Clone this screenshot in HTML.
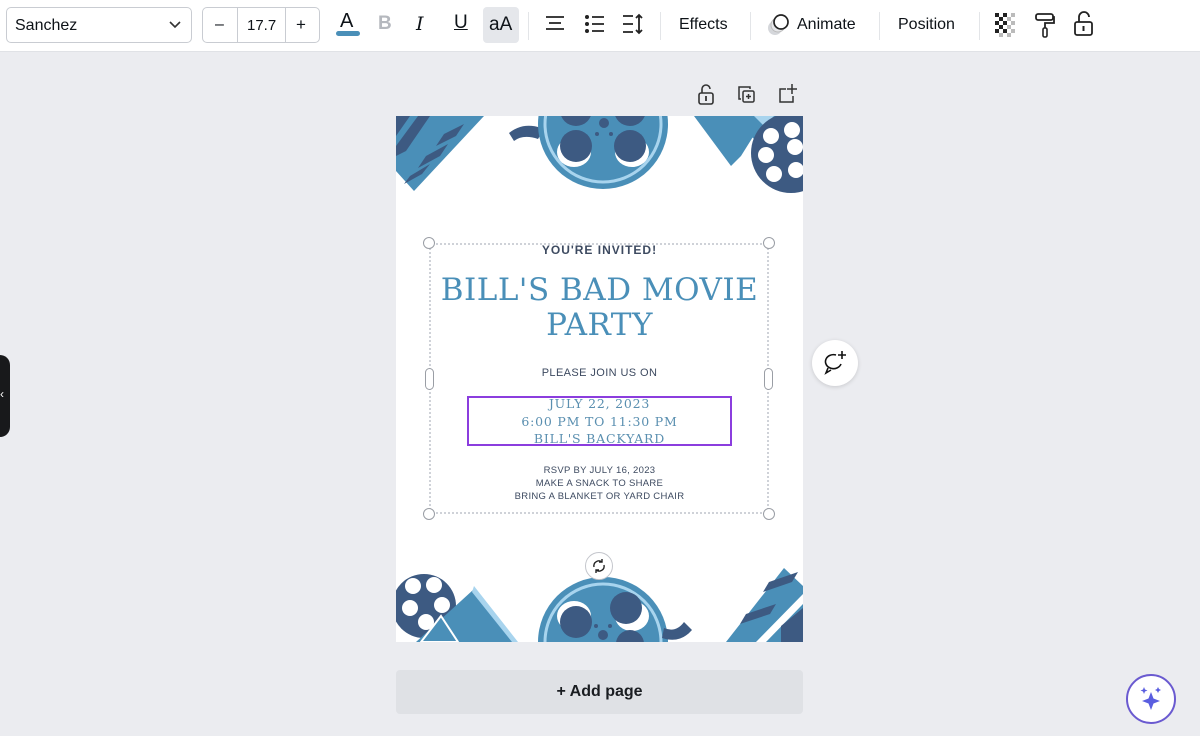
<!DOCTYPE html>
<html><head><meta charset="utf-8"><style>
*{margin:0;padding:0;box-sizing:border-box}
body{width:1200px;height:736px;background:#ebecf0;font-family:"Liberation Sans",sans-serif;position:relative;overflow:hidden;color:#0e1318}
.tb{position:absolute;left:0;top:0;width:1200px;height:52px;background:#fff;border-bottom:1px solid #e0e2e6}
.a{position:absolute}
.sel{left:6px;top:7px;width:186px;height:36px;border:1px solid #c9ccd2;border-radius:5px;font-size:16px;padding:9px 0 0 8px}
.sz{left:202px;top:7px;width:118px;height:36px;border:1px solid #c9ccd2;border-radius:5px}
.sep{width:1px;height:28px;background:#e3e5e8;top:12px}
.txt{font-size:16px;top:16px}
.serif{font-family:"DejaVu Serif","Liberation Serif",serif}
.page{left:396px;top:116px;width:407px;height:526px;background:#fff;overflow:hidden}
.c{position:absolute;left:0;width:407px;text-align:center}
.h{width:12px;height:12px;border:1px solid #9a9ea5;border-radius:50%;background:#fff;position:absolute}
</style></head><body>
<div class="tb">
 <div class="a sel">Sanchez<svg class="a" style="left:162px;top:13px" width="12" height="8"><path d="M1 1l5 5 5-5" stroke="#333" stroke-width="1.6" fill="none"/></svg></div>
 <div class="a sz"><div class="a" style="left:34px;top:0;width:1px;height:34px;background:#c9ccd2"></div><div class="a" style="left:82px;top:0;width:1px;height:34px;background:#c9ccd2"></div>
  <span class="a" style="left:12px;top:8px;font-size:16px">–</span><span class="a" style="left:44px;top:9px;font-size:15px">17.7</span><span class="a" style="left:93px;top:7px;font-size:17px">+</span></div>
 <span class="a" style="left:340px;top:10px;font-size:20px">A</span><div class="a" style="left:336px;top:31px;width:24px;height:5px;border-radius:3px;background:#4a8fb8"></div>
 <span class="a" style="left:378px;top:13px;font-size:19px;font-weight:bold;color:#b5b8be">B</span>
 <span class="a serif" style="left:416px;top:13px;font-size:19px;font-style:italic">I</span>
 <span class="a" style="left:454px;top:12px;font-size:19px;text-decoration:underline">U</span>
 <div class="a" style="left:483px;top:7px;width:36px;height:36px;background:#e5e7eb;border-radius:4px;font-size:19px;padding:7px 0 0 6px">aA</div>
 <div class="a sep" style="left:528px"></div>
 <svg class="a" style="left:545px;top:15px" width="20" height="18"><path d="M1 2h18M4 8h12M1 14h18" stroke="#222" stroke-width="1.8"/></svg>
 <svg class="a" style="left:584px;top:14px" width="22" height="20"><circle cx="3" cy="3" r="2" fill="#222"/><circle cx="3" cy="10" r="2" fill="#222"/><circle cx="3" cy="17" r="2" fill="#222"/><path d="M8 3h12M8 10h12M8 17h12" stroke="#222" stroke-width="1.8"/></svg>
 <svg class="a" style="left:622px;top:13px" width="22" height="22"><path d="M1 3h10M1 11h10M1 19h10M17 2v18M14 5l3-3 3 3M14 17l3 3 3-3" stroke="#222" stroke-width="1.8" fill="none"/></svg>
 <div class="a sep" style="left:660px"></div>
 <span class="a txt" style="left:679px">Effects</span>
 <div class="a sep" style="left:750px"></div>
 <svg class="a" style="left:766px;top:12px" width="26" height="26"><circle cx="9" cy="16" r="7" fill="#d5d7db"/><circle cx="12" cy="13" r="7" fill="#e6e7ea" stroke="#bbb"/><circle cx="15" cy="10" r="7" fill="#fff" stroke="#222" stroke-width="1.7"/></svg>
 <span class="a txt" style="left:797px">Animate</span>
 <div class="a sep" style="left:879px"></div>
 <span class="a txt" style="left:898px">Position</span>
 <div class="a sep" style="left:979px"></div>
 <svg class="a" style="left:995px;top:13px" width="24" height="24"><g fill="#222"><rect x="0" y="0" width="4" height="4"/><rect x="8" y="0" width="4" height="4"/><rect x="4" y="4" width="4" height="4"/><rect x="0" y="8" width="4" height="4"/><rect x="8" y="8" width="4" height="4"/><rect x="4" y="12" width="4" height="4"/><rect x="0" y="16" width="4" height="4"/><rect x="8" y="16" width="4" height="4"/></g><g fill="#bbb"><rect x="12" y="4" width="4" height="4"/><rect x="16" y="0" width="4" height="4"/><rect x="12" y="12" width="4" height="4"/><rect x="16" y="8" width="4" height="4"/><rect x="16" y="16" width="4" height="4"/><rect x="12" y="20" width="4" height="4"/><rect x="4" y="20" width="4" height="4"/></g></svg>
 <svg class="a" style="left:1034px;top:12px" width="22" height="26"><rect x="2" y="2" width="17" height="6" rx="2" stroke="#222" stroke-width="1.8" fill="none"/><path d="M19 5h1v6H11v5" stroke="#222" stroke-width="1.8" fill="none"/><rect x="9" y="16" width="4" height="9" rx="1.5" stroke="#222" stroke-width="1.6" fill="none"/></svg>
 <svg class="a" style="left:1073px;top:11px" width="22" height="26"><path d="M6 11V6a5 5 0 0 1 10 0" stroke="#222" stroke-width="1.8" fill="none"/><rect x="2" y="11" width="17" height="13" rx="2" stroke="#222" stroke-width="1.8" fill="none"/><path d="M10.5 15v5" stroke="#222" stroke-width="2"/></svg>
</div>

<svg class="a" style="left:697px;top:84px" width="20" height="22"><path d="M5 9V5a4 4 0 0 1 8 0" stroke="#333" stroke-width="1.6" fill="none"/><rect x="2" y="9" width="14" height="11" rx="2" stroke="#333" stroke-width="1.6" fill="none"/><path d="M9 12v5" stroke="#333" stroke-width="1.8"/></svg>
<svg class="a" style="left:737px;top:85px" width="20" height="20"><path d="M4 14H2V2h11v2" stroke="#333" stroke-width="1.5" fill="none"/><rect x="6" y="6" width="11" height="11" rx="1.5" stroke="#333" stroke-width="1.5" fill="none"/><path d="M11.5 9v5M9 11.5h5" stroke="#333" stroke-width="1.5"/></svg>
<svg class="a" style="left:777px;top:83px" width="22" height="22"><path d="M9 6H3v13h13v-6" stroke="#333" stroke-width="1.5" fill="none"/><path d="M15 1v10M10 6h10" stroke="#333" stroke-width="1.5"/></svg>

<div class="a page">
<svg class="a" style="left:0;top:0" width="407" height="526">
 <polygon points="0,0 88,0 18,75 0,55" fill="#4a8fb8"/>
 <polygon points="0,0 14,0 0,20" fill="#3d5a82"/>
 <polygon points="22,0 34,0 10,35 0,40 0,30" fill="#3d5a82"/>
 <polygon points="48,18 68,8 60,20 40,30" fill="#3d5a82"/>
 <polygon points="30,40 52,28 44,40 22,52" fill="#3d5a82"/>
 <polygon points="14,60 34,48 26,58 8,68" fill="#3d5a82"/>
 <path d="M113 17 q15 -12 35 -4 l-6 10 q-15 -5 -24 2z" fill="#3d5a82"/>
 <circle cx="207" cy="8" r="65" fill="#4a8fb8"/>
 <circle cx="207" cy="8" r="58" fill="none" stroke="#a8d4ee" stroke-width="3"/>
 <circle cx="207" cy="8" r="55" fill="#4a8fb8"/>
 <ellipse cx="178" cy="36" rx="17" ry="15" fill="#fff"/><ellipse cx="236" cy="36" rx="17" ry="15" fill="#fff"/>
 <circle cx="180" cy="30" r="16" fill="#3d5a82"/><circle cx="234" cy="30" r="16" fill="#3d5a82"/>
 <circle cx="180" cy="-6" r="16" fill="#3d5a82"/><circle cx="234" cy="-6" r="16" fill="#3d5a82"/>
 <circle cx="208" cy="7" r="5" fill="#3d5a82"/><circle cx="201" cy="18" r="2" fill="#3d5a82"/><circle cx="215" cy="18" r="2" fill="#3d5a82"/>
 <polygon points="298,0 370,0 345,40 335,50" fill="#4a8fb8"/>
 <polygon points="335,0 407,0 407,14 375,40" fill="#4a8fb8"/>
 <polygon points="358,0 378,0 368,10" fill="#a8d4ee"/>
 <circle cx="395" cy="37" r="40" fill="#3d5a82"/>
 <circle cx="375" cy="20" r="8" fill="#fff"/><circle cx="396" cy="14" r="8" fill="#fff"/><circle cx="370" cy="39" r="8" fill="#fff"/><circle cx="399" cy="31" r="8" fill="#fff"/><circle cx="378" cy="58" r="8" fill="#fff"/><circle cx="400" cy="54" r="8" fill="#fff"/>
 <circle cx="28" cy="490" r="32" fill="#3d5a82"/>
 <circle cx="17" cy="470" r="8" fill="#fff"/><circle cx="38" cy="469" r="8" fill="#fff"/><circle cx="14" cy="492" r="8" fill="#fff"/><circle cx="46" cy="489" r="8" fill="#fff"/><circle cx="30" cy="506" r="8" fill="#fff"/>
 <polygon points="77,474 118,526 20,526" fill="#4a8fb8"/>
 <polygon points="78,470 122,526 116,526 76,476" fill="#a8d4ee"/>
 <polygon points="45,500 62,526 25,526" fill="#4a8fb8" stroke="#fff" stroke-width="2"/>
 <circle cx="207" cy="526" r="65" fill="#4a8fb8"/>
 <circle cx="207" cy="526" r="58" fill="none" stroke="#a8d4ee" stroke-width="3"/>
 <ellipse cx="178" cy="500" rx="17" ry="15" fill="#fff"/><ellipse cx="236" cy="500" rx="17" ry="15" fill="#fff"/>
 <circle cx="180" cy="506" r="16" fill="#3d5a82"/><circle cx="230" cy="492" r="16" fill="#3d5a82"/><circle cx="234" cy="528" r="14" fill="#3d5a82"/>
 <circle cx="207" cy="519" r="5" fill="#3d5a82"/><circle cx="200" cy="510" r="2" fill="#3d5a82"/><circle cx="214" cy="510" r="2" fill="#3d5a82"/>
 <path d="M268 512 q12 5 20 -6 l8 8 q-12 14 -30 8z" fill="#3d5a82"/>
 <polygon points="388,452 407,470 407,526 330,526" fill="#4a8fb8"/>
 <polygon points="373,466 402,456 396,466 367,476" fill="#3d5a82"/>
 <polygon points="350,498 380,488 374,498 344,508" fill="#3d5a82"/>
 <polygon points="407,478 407,488 370,526 360,526" fill="#fff"/>
 <polygon points="385,510 407,492 407,526 385,526" fill="#3d5a82"/>
</svg>
<div class="c" style="top:127px;font-size:12px;font-weight:bold;letter-spacing:1px;color:#3d4a60">YOU'RE INVITED!</div>
<div class="c serif" style="top:157px;font-size:31px;line-height:35px;color:#4a8fb8;letter-spacing:0.5px">BILL'S BAD MOVIE<br>PARTY</div>
<div class="c" style="top:251px;font-size:11px;color:#3d4a60;letter-spacing:0.4px">PLEASE JOIN US ON</div>
<div class="c serif" style="top:279px;font-size:12.5px;line-height:17.5px;color:#5a8fb0;letter-spacing:0.8px">JULY 22, 2023<br>6:00 PM TO 11:30 PM<br>BILL'S BACKYARD</div>
<div class="c" style="top:348px;font-size:9.5px;line-height:13px;color:#3d4a60;letter-spacing:0.3px">RSVP BY JULY 16, 2023<br>MAKE A SNACK TO SHARE<br>BRING A BLANKET OR YARD CHAIR</div>
</div>
<div class="a" style="left:429px;top:243px;width:340px;height:271px;border:2px dotted #cfd2d8"></div>
<div class="h" style="left:423px;top:237px"></div><div class="h" style="left:763px;top:237px"></div>
<div class="h" style="left:423px;top:508px"></div><div class="h" style="left:763px;top:508px"></div>
<div class="a" style="left:425px;top:368px;width:9px;height:22px;border:1px solid #9a9ea5;border-radius:5px;background:#fff"></div>
<div class="a" style="left:764px;top:368px;width:9px;height:22px;border:1px solid #9a9ea5;border-radius:5px;background:#fff"></div>
<div class="a" style="left:467px;top:396px;width:265px;height:50px;border:2px solid #8b3dde"></div>
<div class="a" style="left:585px;top:552px;width:28px;height:28px;border-radius:50%;background:#fff;border:1px solid #c4c6cc"></div>
<svg class="a" style="left:591px;top:558px" width="16" height="16"><path d="M3 9a5 5 0 0 1 8-5M13 7a5 5 0 0 1-8 5M11 1v3H8M5 15v-3h3" stroke="#222" stroke-width="1.4" fill="none"/></svg>
<div class="a" style="left:812px;top:340px;width:46px;height:46px;border-radius:50%;background:#fff;box-shadow:0 1px 4px rgba(0,0,0,.15)"></div>
<svg class="a" style="left:822px;top:350px" width="26" height="26"><path d="M14 5a8 7 0 1 0 5 9" stroke="#111" stroke-width="1.6" fill="none"/><path d="M6 18l-2 5 5-3" stroke="#111" stroke-width="1.6" fill="none"/><path d="M20 1v8M16 5h8" stroke="#111" stroke-width="1.6"/></svg>
<div class="a" style="left:-20px;top:355px;width:30px;height:82px;background:#18191b;border-radius:10px"></div>
<span class="a" style="left:0;top:387px;color:#fff;font-size:12px">‹</span>
<div class="a" style="left:396px;top:670px;width:407px;height:44px;background:#dfe1e5;border-radius:4px;text-align:center;font-size:16px;font-weight:bold;padding-top:13px;color:#1a1d21">+ Add page</div>
<div class="a" style="left:1126px;top:674px;width:50px;height:50px;border-radius:50%;background:#fff;border:2px solid #6a5ad0"></div>
<svg class="a" style="left:1137px;top:685px" width="28" height="28"><path d="M14 7l2.5 6.5L23 16l-6.5 2.5L14 25l-2.5-6.5L5 16l6.5-2.5z" fill="#5a5ee0"/><path d="M7 2l1 2.5 2.5 1-2.5 1L7 9 6 6.5 3.5 5.5 6 4.5z" fill="#5a5ee0"/><path d="M21 2l1 2 2 1-2 1-1 2-1-2-2-1 2-1z" fill="#5a5ee0"/></svg>
</body></html>
